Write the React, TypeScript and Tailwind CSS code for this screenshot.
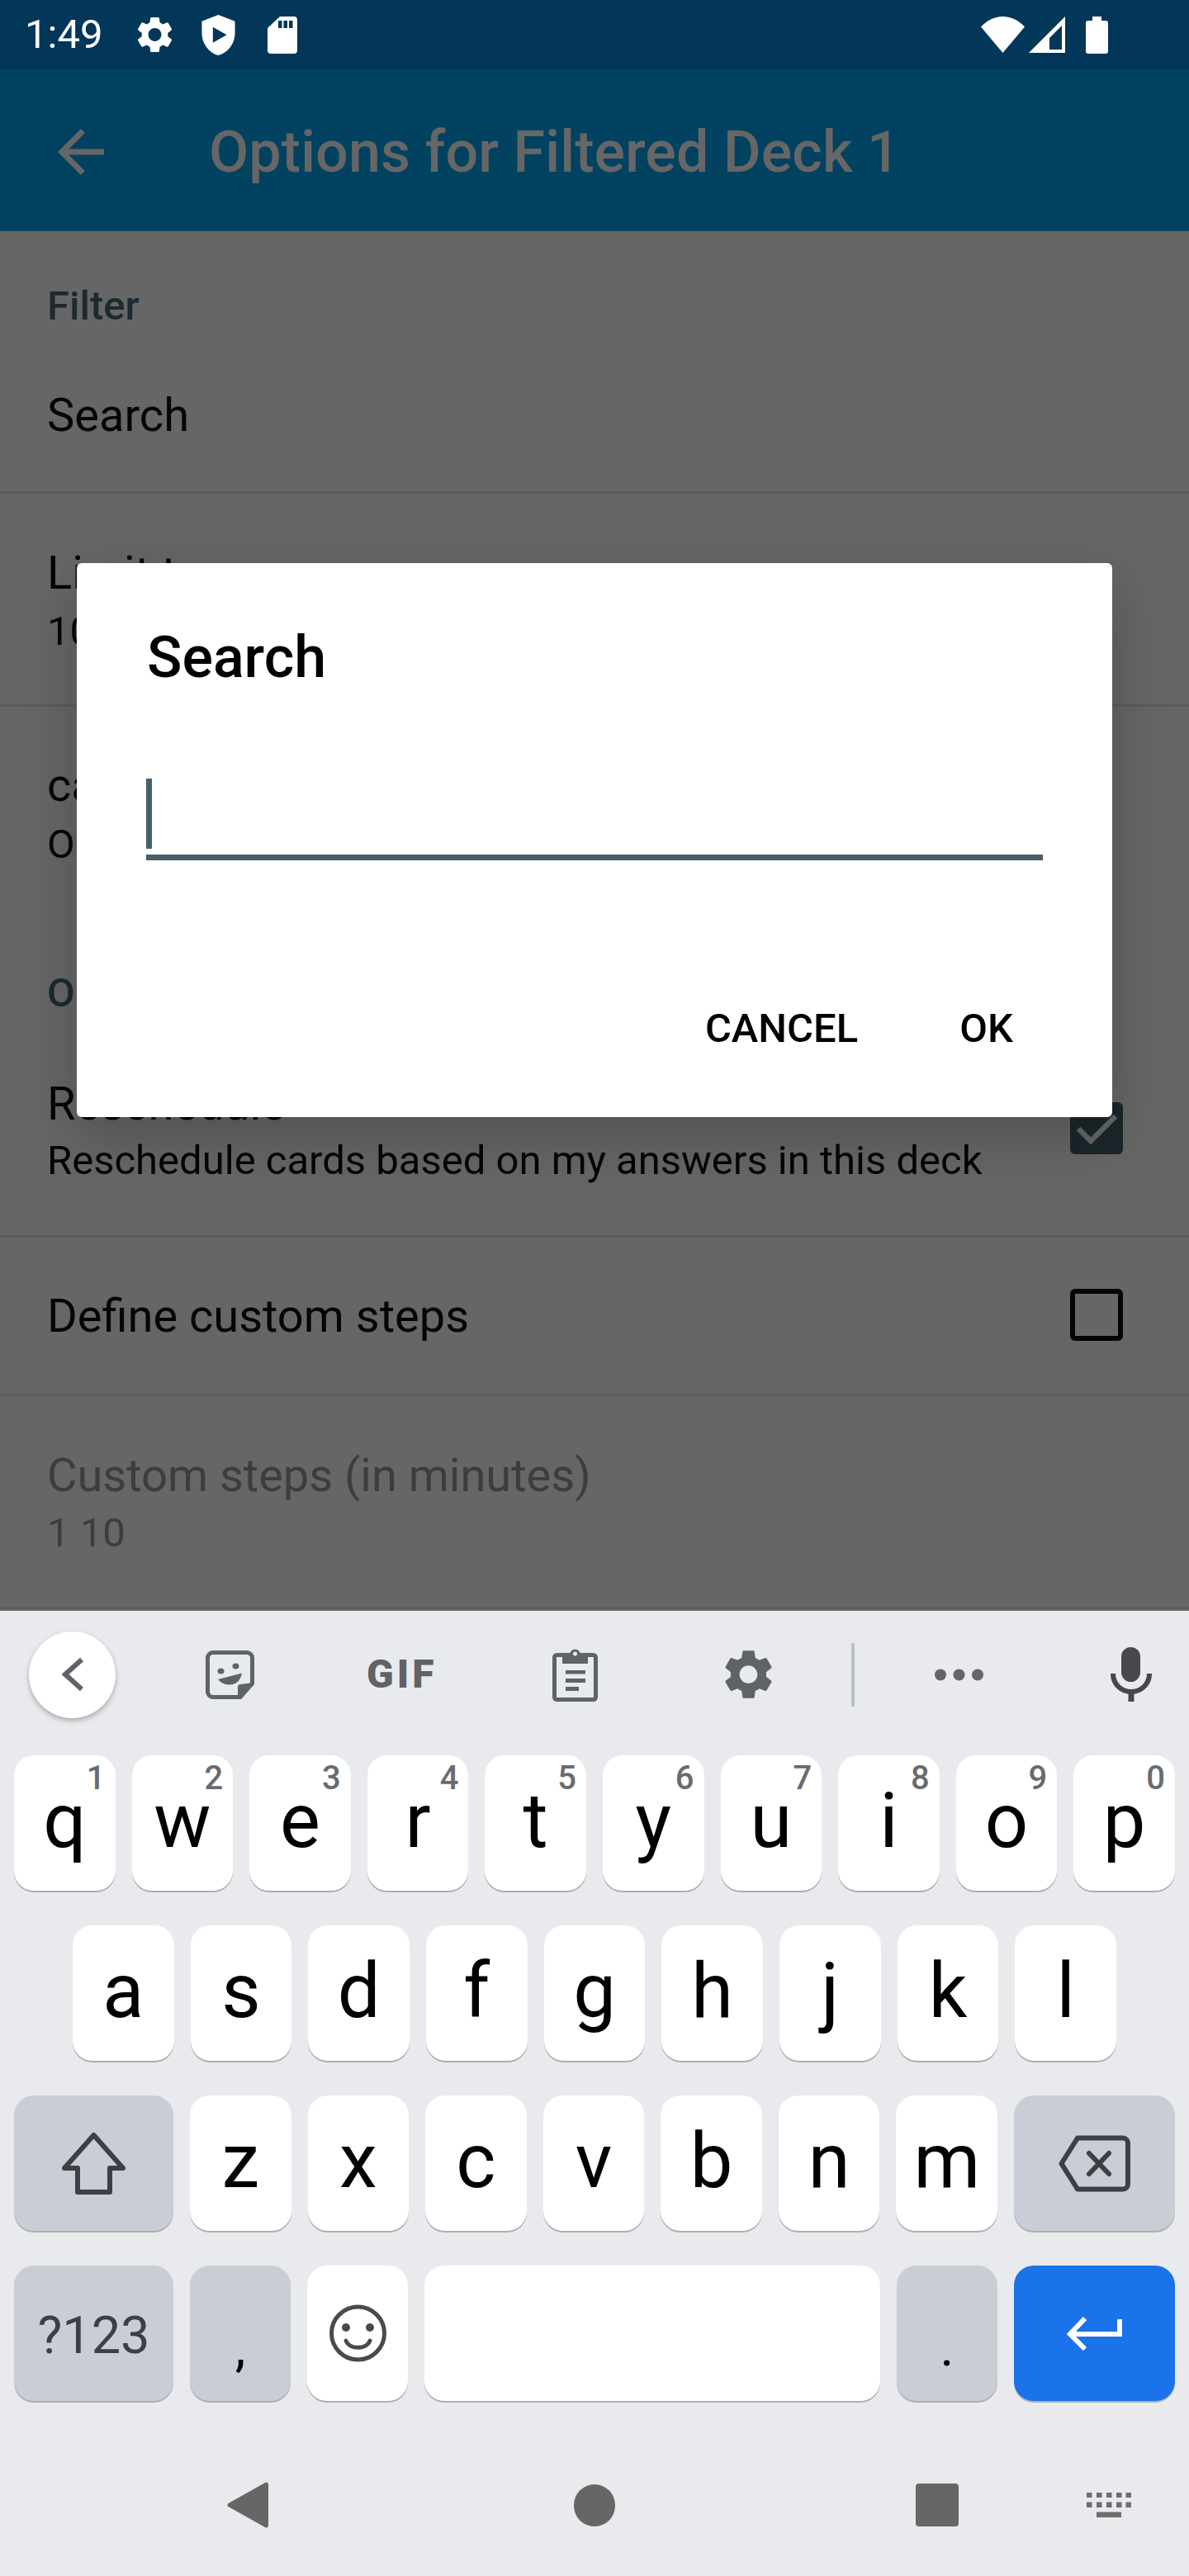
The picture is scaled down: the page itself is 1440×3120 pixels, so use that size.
import type { ReactNode } from 'react';

const GEAR =
  'M19.14 12.94c.04-.3.06-.61.06-.94 0-.32-.02-.64-.07-.94l2.03-1.58c.18-.14.23-.41.12-.61l-1.92-3.32c-.12-.22-.37-.29-.59-.22l-2.39.96c-.5-.38-1.03-.7-1.62-.94l-.36-2.54c-.04-.24-.24-.41-.48-.41h-3.84c-.24 0-.43.17-.47.41l-.36 2.54c-.59.24-1.13.57-1.62.94l-2.39-.96c-.22-.08-.47 0-.59.22L2.74 8.87c-.12.21-.08.47.12.61l2.03 1.58c-.05.3-.09.63-.09.94s.02.64.07.94l-2.03 1.58c-.18.14-.23.41-.12.61l1.92 3.32c.12.22.37.29.59.22l2.39-.96c.5.38 1.03.7 1.62.94l.36 2.54c.05.24.24.41.48.41h3.84c.24 0 .44-.17.47-.41l.36-2.54c.59-.24 1.13-.56 1.62-.94l2.39.96c.22.08.47 0 .59-.22l1.92-3.32c.12-.22.07-.47-.12-.61l-2.01-1.58zM12 15.6c-1.98 0-3.6-1.62-3.6-3.6s1.62-3.6 3.6-3.6 3.6 1.62 3.6 3.6-1.62 3.6-3.6 3.6z';

function StatusBar() {
  return (
    <div className="flex h-[84px] items-center bg-[#02375a] text-white">
      <span className="ml-[30px] w-[92px] text-[49px] leading-[60px]">1:49</span>
      <svg className="ml-[44px]" width="43" height="44" viewBox="2.5 2 19 20" fill="#fff">
        <path d={GEAR} />
      </svg>
      <svg className="ml-[35px]" width="41" height="49" viewBox="3 1 18 22" fill="#fff" fillRule="evenodd">
        <path d="M12 1 3 4.5V11c0 5.55 3.84 10.74 9 12 5.16-1.26 9-6.45 9-12V4.5zM9 7.6v8.6l7.5-4.3z" />
      </svg>
      <svg className="ml-[39px]" width="36" height="45" viewBox="0 0 36 45" fill="#fff" fillRule="evenodd">
        <path d="M15 0h17a4 4 0 0 1 4 4v37a4 4 0 0 1-4 4H4a4 4 0 0 1-4-4V14zM13 5v9h4.5V5zM19.5 5v9H24V5zM26 5v9h4.5V5z" />
      </svg>
      <svg className="ml-[828px]" width="53" height="44" viewBox="0 0 53 44" fill="#fff">
        <path d="M0 12.5C7 5 16 0 26.5 0S46 5 53 12.5L26.5 44z" />
      </svg>
      <svg className="ml-[5px]" width="44" height="44" viewBox="0 0 44 44" fill="#fff" fillRule="evenodd">
        <path d="M44 0v44H0zM40 11 25 26v14h15z" />
      </svg>
      <svg className="ml-[25px]" width="27" height="45" viewBox="0 0 27 45" fill="#fff">
        <path d="M8 0h11v5h5a3 3 0 0 1 3 3v34a3 3 0 0 1-3 3H3a3 3 0 0 1-3-3V8a3 3 0 0 1 3-3h5z" />
      </svg>
    </div>
  );
}

function AppBar() {
  return (
    <div className="flex h-[196px] items-center bg-[#004260] pt-[3px] text-[#666666]">
      <svg className="ml-[70px]" width="56" height="56" viewBox="4 4 16 16" fill="#666666">
        <path d="M20 11H7.83l5.59-5.59L12 4l-8 8 8 8 1.41-1.41L7.83 13H20v-2z" />
      </svg>
      <span className="ml-[127px] text-[70px] leading-[82px] font-medium tracking-[0.1px]">Options for Filtered Deck 1</span>
    </div>
  );
}

function Row({
  title,
  summary,
  height,
  titleTop,
  gap = 8,
  disabled,
  divider = true,
  control,
}: {
  title: string;
  summary?: string;
  height: string;
  titleTop: string;
  gap?: number;
  disabled?: boolean;
  divider?: boolean;
  control?: ReactNode;
}) {
  const colour = disabled ? 'text-[#3d3d3d]' : 'text-[#050505]';
  return (
    <div className={`flex justify-between pl-[57px] pr-[80px] ${divider ? 'border-b-[3px] border-[#5c5c5c]' : ''} ${height}`}>
      <div className={titleTop}>
        <div className={`text-[56px] leading-[66px] ${colour}`}>{title}</div>
        {summary && (
          <div className={`text-[49px] leading-[60px] ${colour} ${gap === 6 ? 'mt-[6px]' : gap === 7 ? 'mt-[7px]' : gap === 9 ? 'mt-[9px]' : 'mt-[8px]'}`}>
            {summary}
          </div>
        )}
      </div>
      {control}
    </div>
  );
}

function SectionLabel({ text, top }: { text: string; top: string }) {
  return <div className={`pl-[57px] text-[49px] leading-[60px] font-medium text-[#1c2a30] ${top}`}>{text}</div>;
}

function SettingsList() {
  return (
    <div className="h-[1671px] overflow-hidden bg-[#666666]">
      <SectionLabel text="Filter" top="pt-[61px]" />
      <Row title="Search" height="h-[197px]" titleTop="pt-[69px]" />
      <Row title="Limit to" summary="100 cards" height="h-[258px]" titleTop="pt-[63px]" />
      <Row title="cards selected by" summary="Oldest seen first" height="h-[259px]" titleTop="pt-[62px]" gap={9} divider={false} />
      <SectionLabel text="Options" top="pt-[58px]" />
      <Row
        title="Reschedule"
        summary="Reschedule cards based on my answers in this deck"
        height="h-[266px]"
        titleTop="pt-[71px]"
        gap={6}
        control={
          <div className="mt-[102px] flex h-[63px] w-[64px] items-center justify-center rounded-[6px] bg-[#1b262b]">
            <svg width="50" height="40" viewBox="0 0 50 40" fill="none" stroke="#666666" strokeWidth="6.5">
              <path d="M3 20 18 35 48 5" />
            </svg>
          </div>
        }
      />
      <Row
        title="Define custom steps"
        height="h-[192px]"
        titleTop="pt-[62px]"
        control={<div className="mt-[62px] h-[63px] w-[64px] rounded-[6px] border-[6px] border-[#050505]" />}
      />
      <Row title="Custom steps (in minutes)" summary="1 10" height="h-[258px]" titleTop="pt-[63px]" gap={7} disabled />
    </div>
  );
}

function SearchDialog() {
  return (
    <div className="absolute top-[682px] left-[93px] h-[671px] w-[1254px] rounded-[6px] bg-white pl-[84px] shadow-[0_24px_70px_rgba(0,0,0,0.22)]">
      <div className="pt-[73px] pl-[1px] text-[70px] leading-[82px] font-medium text-black">Search</div>
      <div className="mt-[106px] h-[99px] w-[1086px] border-b-[7px] border-[#485e6b]">
        <div className="h-[85px] w-[7px] bg-[#485e6b]" />
      </div>
      <div className="mt-[174px] flex w-[1050px] justify-end gap-[123px] text-[49px] leading-[60px] font-medium text-black">
        <span>CANCEL</span>
        <span>OK</span>
      </div>
    </div>
  );
}

function Key({
  children,
  hint,
  className = 'flex-1 bg-white',
}: {
  children?: ReactNode;
  hint?: string;
  className?: string;
}) {
  return (
    <div className={`relative flex h-[164px] items-center justify-center rounded-[24px] shadow-[0_2px_0_#adaeb1] ${className}`}>
      {hint && (
        <span className="absolute top-[8px] right-[12px] text-[40px] leading-[40px] font-medium text-[#696b6e]">{hint}</span>
      )}
      {children}
    </div>
  );
}

function Letter({ children }: { children: string }) {
  return <span className="pb-[4px] text-[92px] leading-[110px] text-black">{children}</span>;
}

function Toolbar() {
  return (
    <div className="flex h-[175px] items-center pb-[21px] pl-[35px]">
      <div className="flex h-[105px] w-[105px] items-center justify-center rounded-full bg-white shadow-[0_3px_6px_rgba(0,0,0,0.28)]">
        <svg width="26" height="40" viewBox="0 0 26 40" fill="none" stroke="#5f6368" strokeWidth="6">
          <path d="M24 2 4 20l20 18" />
        </svg>
      </div>
      <svg className="ml-[109px]" width="59" height="59" viewBox="0 0 59 59" fill="none">
        <path d="M9 2.5h41a6.5 6.5 0 0 1 6.5 6.5v31L42 56.5H9A6.500 6.500 0 0 1 2.500 50V9A6.500 6.500 0 0 1 9 2.500z" stroke="#5f6368" strokeWidth="5" />
        <path d="M58 39 42 58l-3-2V44q0-3 3-3z" fill="#5f6368" />
        <ellipse cx="18.500" cy="25" rx="4" ry="3.500" fill="#5f6368" />
        <ellipse cx="36.500" cy="19" rx="4" ry="3.500" fill="#5f6368" />
        <path d="M15 35 44 27.500Q41 42 28 41.500 20 41 15 35z" fill="#5f6368" />
      </svg>
      <span className="ml-[136px] w-[82px] text-center text-[48px] leading-[46px] font-black tracking-[4px] whitespace-nowrap text-[#5f6368]">GIF</span>
      <svg className="ml-[143px]" width="55" height="66" viewBox="0 0 55 66" fill="none">
        <rect x="2.500" y="9.500" width="50" height="54" rx="3" stroke="#5f6368" strokeWidth="5" />
        <path d="M12 9h9a6.500 6.500 0 0 1 13 0h9v11H12z" fill="#5f6368" fillRule="evenodd" />
        <circle cx="27.500" cy="8" r="2.500" fill="#e8eaed" />
        <path d="M16 28h24v4.500H16zM16 38h24v5H16zM16 48h16v5H16z" fill="#5f6368" />
      </svg>
      <svg className="ml-[153px]" width="59" height="60" viewBox="2.500 2 19 20" fill="#5f6368">
        <path d={GEAR} />
      </svg>
      <div className="ml-[95px] h-[77px] w-[4px] bg-[#bdc1c6]" />
      <svg className="ml-[97px]" width="59" height="15" viewBox="0 0 59 15" fill="#636568">
        <circle cx="7" cy="7.500" r="7" />
        <circle cx="29.500" cy="7.500" r="7" />
        <circle cx="52" cy="7.500" r="7" />
      </svg>
      <svg className="ml-[154px]" width="50" height="66" viewBox="0 0 50 66" fill="none">
        <rect x="13" y="0" width="23" height="42" rx="11.500" fill="#46484b" />
        <path d="M3 32c0 13 10 22 22 22s22-9 22-22" stroke="#46484b" strokeWidth="6" />
        <path d="M25 54v12" stroke="#46484b" strokeWidth="7" />
      </svg>
    </div>
  );
}

function Keyboard() {
  const special = 'bg-[#cacdd5]';
  return (
    <div className="h-[1169px] bg-[#e8eaed]">
      <Toolbar />
      <div className="flex flex-col gap-[42px]">
        <div className="flex gap-[20px] px-[17px]">
          {['q', 'w', 'e', 'r', 't', 'y', 'u', 'i', 'o', 'p'].map((k, i) => (
            <Key key={k} hint={String((i + 1) % 10)}>
              <Letter>{k}</Letter>
            </Key>
          ))}
        </div>
        <div className="flex gap-[20px] px-[88px]">
          {['a', 's', 'd', 'f', 'g', 'h', 'j', 'k', 'l'].map((k) => (
            <Key key={k}>
              <Letter>{k}</Letter>
            </Key>
          ))}
        </div>
        <div className="flex gap-[20px] px-[17px]">
          <Key className={`w-[193px] ${special}`}>
            <svg width="79" height="76" viewBox="0 0 79 76" fill="none" stroke="#3c4043" strokeWidth="6" strokeLinejoin="round">
              <path d="M39.500 4 75 44H59v29H20V44H4z" />
            </svg>
          </Key>
          {['z', 'x', 'c', 'v', 'b', 'n', 'm'].map((k) => (
            <Key key={k}>
              <Letter>{k}</Letter>
            </Key>
          ))}
          <Key className={`w-[195px] ${special}`}>
            <svg width="87" height="69" viewBox="0 0 87 69" fill="none" stroke="#3c4043" strokeWidth="6" strokeLinecap="round" strokeLinejoin="round">
              <path d="M23 3.500h55a6 6 0 0 1 6 6v50a6 6 0 0 1-6 6H23L3.500 34.500z" />
              <path d="M37 22 61 47M61 22 37 47" />
            </svg>
          </Key>
        </div>
        <div className="flex gap-[20px] px-[17px]">
          <Key className={`w-[193px] ${special}`}>
            <span className="pt-[6px] text-[63px] leading-[76px] text-[#3c4043]">?123</span>
          </Key>
          <Key className={`w-[122px] ${special}`}>
            <span className="pt-[36px] text-[64px] leading-[76px] text-black">,</span>
          </Key>
          <Key className="w-[122px] bg-white">
            <svg width="69" height="70" viewBox="0 0 69 70" fill="none" stroke="#4a4a4a" strokeWidth="5">
              <circle cx="34.500" cy="35" r="32" />
              <circle cx="20" cy="28" r="5" fill="#4a4a4a" stroke="none" />
              <circle cx="49" cy="28" r="5" fill="#4a4a4a" stroke="none" />
              <path d="M20 44c4 11 25 11 29 0" strokeLinecap="round" />
            </svg>
          </Key>
          <Key />
          <Key className={`w-[122px] ${special}`}>
            <span className="pt-[36px] text-[64px] leading-[76px] text-black">.</span>
          </Key>
          <Key className="w-[195px] bg-[#1a73e8]">
            <svg width="67" height="41" viewBox="0 0 67 41" fill="none" stroke="#fff" strokeWidth="6">
              <path d="M64 3v18H5" />
              <path d="M22 2 4 21l18 18" />
            </svg>
          </Key>
        </div>
      </div>
      <div className="flex h-[210px] items-center pt-[42px]">
        <svg className="ml-[275px]" width="50" height="56" viewBox="0 0 50 56" fill="#666666">
          <path d="M47 .5a3 3 0 0 1 3 3v49a3 3 0 0 1-3 3L1.500 30a2.500 2.500 0 0 1 0-4z" />
        </svg>
        <div className="ml-[370px] h-[51px] w-[50px] rounded-full bg-[#666666]" />
        <div className="ml-[364px] h-[52px] w-[52px] rounded-[4px] bg-[#666666]" />
        <svg className="ml-[155px]" width="54" height="30" viewBox="0 0 54 30" fill="#6e6e6e">
          <path d="M0 0h6.500v6H0zM12 0h6.500v6H12zM24 0h6.500v6H24zM36 0h6.500v6H36zM47.500 0H54v6h-6.500zM0 11.500h6.500v6.500H0zM12 11.500h6.500v6.500H12zM24 11.500h6.500v6.500H24zM36 11.500h6.500v6.500H36zM47.500 11.500H54v6.500h-6.500zM12 23.500h30V30H12z" />
        </svg>
      </div>
    </div>
  );
}

export default function App() {
  return (
    <div className="relative h-[3120px] w-[1440px] overflow-hidden bg-[#666666] font-[Roboto,sans-serif]">
      <StatusBar />
      <AppBar />
      <SettingsList />
      <Keyboard />
      <SearchDialog />
    </div>
  );
}
